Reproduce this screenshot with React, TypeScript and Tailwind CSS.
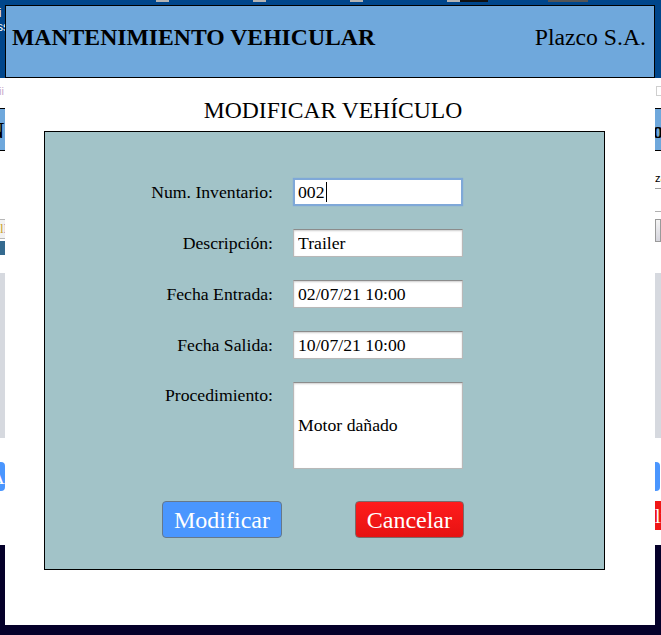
import React from "react"

const fields = [
  { label: "Descripción:", value: "Trailer" },
  { label: "Fecha Entrada:", value: "02/07/21 10:00" },
  { label: "Fecha Salida:", value: "10/07/21 10:00" },
]

const inputBox =
  "h-[28px] w-[170px] border border-[#b8b8b8] border-t-[#8c8c8c] bg-white px-[4px] font-['Liberation_Serif',serif] text-[17.7px] text-black shadow-[inset_0_1px_2px_rgba(0,0,0,0.2)] outline-none"

function EdgeRow({ className, left, right }: { className?: string; left?: React.ReactNode; right?: React.ReactNode }) {
  return (
    <div className={"flex justify-between " + (className ?? "")}>
      <div className="w-[5px] overflow-hidden">{left}</div>
      <div className="w-[6px] overflow-hidden">{right}</div>
    </div>
  )
}

export default function App() {
  return (
    <div className="relative h-[635px] w-[661px] overflow-hidden bg-white font-['Liberation_Serif',serif]">
      {/* Page behind the dialog */}
      <div className="flex h-full flex-col">
        <div className="flex h-[78px] flex-col bg-[#00468b]">
          <div className="flex h-[2px]">
            <div className="ml-[156px] w-[13px] bg-[#b4b4b4]" />
            <div className="ml-[84px] w-[13px] bg-[#b4b4b4]" />
            <div className="ml-[84px] w-[13px] bg-[#b4b4b4]" />
            <div className="ml-[84px] w-[13px] bg-[#b4b4b4]" />
            <div className="w-[28px] bg-[#111]" />
            <div className="ml-[60px] w-[40px] bg-[#555]" />
          </div>
          <div className="mt-[4px] w-[5px] overflow-hidden font-['Liberation_Sans',sans-serif] text-[12px] leading-[14px] text-white">
            <div className="-ml-[4px]">li</div>
            <div className="-ml-[3px]">ss</div>
          </div>
        </div>

        <div className="flex h-[467px] flex-col">
          <EdgeRow
            className="mt-[8px] h-[10px]"
            left={<span className="-ml-[1px] block font-['Liberation_Sans',sans-serif] text-[11px] leading-[10px] text-[#c9a9c9]">ii</span>}
            right={<div className="ml-[1px] h-[10px] w-[10px] border border-[#cfcfcf]" />}
          />
          <div className="-mx-[20px] mt-[12px] flex h-[43px] items-center justify-between border border-black bg-[#6fa8dc] pl-[6px] pr-[16px] text-[24px] font-bold">
            <span>N</span>
            <span>Co</span>
          </div>
          <EdgeRow
            className="mt-[20px] h-[14px]"
            right={<span className="block font-['Liberation_Sans',sans-serif] text-[11px] leading-[14px] text-black">za</span>}
          />
          <EdgeRow
            className="mt-[3px] h-[1px]"
            right={<div className="h-[1px] bg-[#a0a0a0]" />}
          />
          <EdgeRow
            className="mt-[22px] h-[1px]"
            right={<div className="h-[1px] bg-[#b0b0b0]" />}
          />
          <EdgeRow
            className="mt-[7px] h-[36px]"
            left={
              <div className="flex flex-col">
                <div className="flex h-[20px] items-center border-y border-[#b8b8b8] bg-[#f2f2f2] text-[13px]">
                  <span className="text-[#c9a227]">l</span>
                  <span className="text-[#7a3fa0]">l</span>
                </div>
                <div className="mt-[2px] h-[14px] bg-[#356a8f]" />
              </div>
            }
            right={<div className="h-[23px] border border-[#9a9a9a] bg-gradient-to-b from-[#f4f4f4] to-[#d6d6de]" />}
          />
          <EdgeRow
            className="mt-[18px] h-[165px]"
            left={<div className="h-full bg-[#d6d9df]" />}
            right={<div className="h-full bg-[#d6d9df]" />}
          />
          <EdgeRow
            className="mt-[24px] h-[29px]"
            left={
              <div className="-ml-[10px] flex h-full w-[15px] items-center justify-end rounded-[4px] bg-[#4a96fe] text-[22px] text-white">
                A
              </div>
            }
            right={<div className="h-full w-[5px] rounded-r-[4px] bg-[#4a96fe]" />}
          />
          <EdgeRow
            className="mt-[10px] h-[29px]"
            right={
              <div className="flex h-full w-[10px] items-center bg-[#f01616] text-[20px] text-white">
                li
              </div>
            }
          />
        </div>

        <div className="flex-1 bg-[#05002a]" />
      </div>

      {/* Dialog */}
      <div className="absolute left-[5px] top-[5px] flex h-[620px] w-[650px] flex-col bg-white text-black">
        <header className="flex h-[73px] items-center justify-between border border-black bg-[#6fa8dc] pb-[7px] pl-[6px] pr-[8px] text-[23.7px]">
          <h1 className="font-bold">MANTENIMIENTO VEHICULAR</h1>
          <span>Plazco S.A.</span>
        </header>

        <h2 className="mt-[19px] pl-[6px] text-center text-[23.6px] leading-[27px]">MODIFICAR VEHÍCULO</h2>

        <div className="ml-[39px] mt-[7px] flex w-[561px] flex-col gap-[23px] border border-black bg-[#a2c3c8] pb-[31px] pt-[46px] text-[17.7px]">
          <div className="flex items-center">
            <label className="w-[228px] text-right">Num. Inventario:</label>
            <div className="ml-[20px] flex h-[28px] w-[170px] items-center border-2 border-[#7fa8d8] bg-white px-[3px] shadow-[0_0_1px_#7fa8d8]">
              <span>002</span>
              <span className="ml-[1px] h-[20px] w-[1px] bg-black" />
            </div>
          </div>

          {fields.map((f) => (
            <div key={f.label} className="flex items-center">
              <label className="w-[228px] text-right">{f.label}</label>
              <input className={"ml-[20px] " + inputBox} value={f.value} readOnly />
            </div>
          ))}

          <div className="flex items-start">
            <label className="w-[228px] text-right">Procedimiento:</label>
            <input className={"ml-[20px] " + inputBox + " h-[87px]"} value="Motor dañado" readOnly />
          </div>

          <div className="ml-[117px] mt-[9px] flex w-[302px] justify-between">
            <button className="h-[37px] rounded-[4px] border border-[#66788a] bg-[#4a96fe] px-[11px] text-[24px] leading-none text-white">
              Modificar
            </button>
            <button className="h-[37px] rounded-[4px] border border-[#7a6a6a] bg-gradient-to-b from-[#ff1c1c] to-[#e61212] px-[11px] text-[24px] leading-none text-white">
              Cancelar
            </button>
          </div>
        </div>
      </div>
    </div>
  )
}
